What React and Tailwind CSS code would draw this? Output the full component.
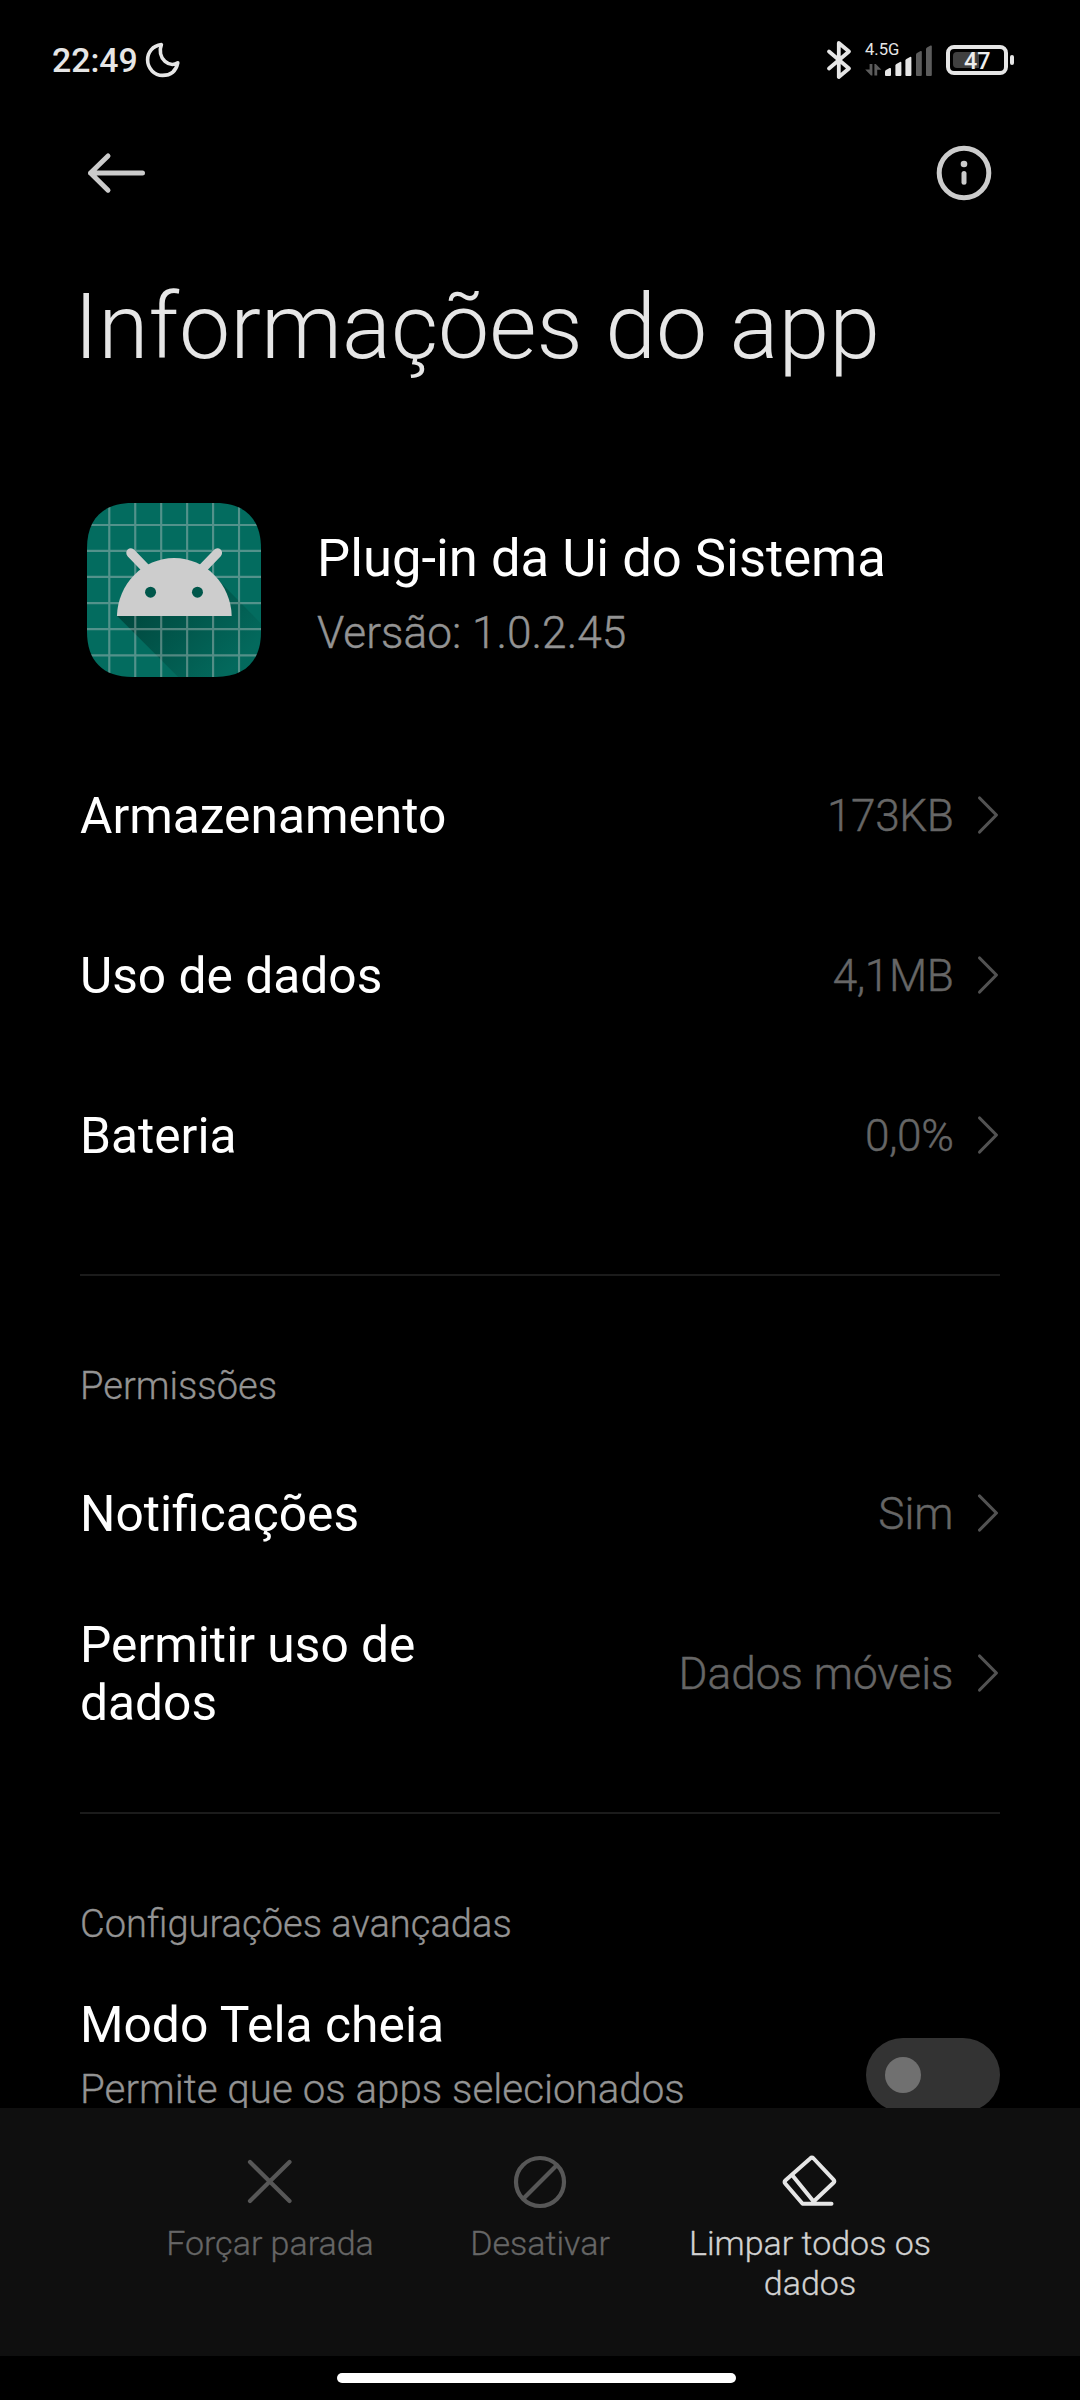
import React from "react";

function MoonIcon() {
  return (
    <svg className="h-[40px] w-[40px]" viewBox="0 0 40 40" fill="none" stroke="#e6e6e6" strokeWidth="3.6" strokeLinejoin="round">
      <path d="M18.4 4.6 C9.5 5.6 4.6 12.6 4.6 19.8 C4.6 28.6 11.5 35.4 19.6 35.4 C27.5 35.4 33 31 34.8 22.8 C31 25.2 26 24.8 22 21.4 C17.4 17.4 16 10.6 18.4 4.6 Z" />
    </svg>
  );
}

function BluetoothIcon() {
  return (
    <svg className="h-[40px] w-[26px]" viewBox="0 0 26 40" fill="none" stroke="#e6e6e6" strokeWidth="3.8" strokeLinejoin="round" strokeLinecap="round">
      <path d="M3 11.5 L23 28.5 L12.8 37 V3 L23 11.5 L3 28.5" />
    </svg>
  );
}

function SignalIcon() {
  return (
    <svg className="h-[32px] w-[68px]" viewBox="865 45 68 32">
      <g fill="#5c5c5c">
        <path d="M869.6 64 h2.8 v11.4 h-1.4 L865.2 69.6 h4.4z" />
        <path d="M874.4 75.4 v-11.4 h1.4 L881.4 69.8 h-4.2 v5.6z" />
        <path d="M916 54.5 q0 -1 1 -1.6 l3.6 -1.8 q1.2 -.5 1.2 .8 V75 q0 1 -1 1 h-3.8 q-1 0 -1 -1z" />
        <path d="M926 49 q0 -1 1 -1.6 l3.6 -1.8 q1.2 -.5 1.2 .8 V75 q0 1 -1 1 h-3.8 q-1 0 -1 -1z" />
      </g>
      <g fill="#e6e6e6">
        <path d="M885 71.6 q0 -1 1 -1.6 l3.6 -1.9 q1.4 -.5 1.4 .8 V75 q0 1 -1 1 h-4 q-1 0 -1 -1z" />
        <path d="M895.4 65.5 q0 -1 1 -1.6 l3.6 -1.9 q1.4 -.5 1.4 .8 V75 q0 1 -1 1 h-4 q-1 0 -1 -1z" />
        <path d="M905.4 60.5 q0 -1 1 -1.6 l3.6 -1.9 q1.4 -.5 1.4 .8 V75 q0 1 -1 1 h-4 q-1 0 -1 -1z" />
      </g>
    </svg>
  );
}

function Battery() {
  return (
    <div className="flex items-center gap-[2px]">
      <div className="relative h-[30px] w-[62px] rounded-[8px] border-4 border-[#e6e6e6]">
        <div className="absolute left-[3px] top-[3px] h-[16px] w-[26px] rounded-l-[4px] bg-[#404040]" />
        <div className="absolute left-[14px] top-0 text-[23.4px] font-medium leading-[24px] text-[#ededed]">47</div>
      </div>
      <div className="h-[10px] w-[4px] rounded-[2px] bg-[#e6e6e6]" />
    </div>
  );
}

function StatusBar() {
  return (
    <div className="flex h-[120px] items-center pl-[52px] pr-[66px]">
      <span className="pt-[2px] text-[33.8px] font-medium leading-[40px] text-[#e6e6e6]">22:49</span>
      <span className="ml-[5px]"><MoonIcon /></span>
      <div className="ml-auto flex items-center">
        <BluetoothIcon />
        <div className="relative ml-[13px] mt-[1px]">
          <SignalIcon />
          <span className="absolute left-0 top-[-5px] text-[16.6px] leading-[20px] text-[#e6e6e6]">4.5G</span>
        </div>
        <div className="ml-[13px]"><Battery /></div>
      </div>
    </div>
  );
}

function BackIcon() {
  return (
    <svg className="h-[42px] w-[60px]" viewBox="0 0 60 42" fill="none" stroke="#cccccc" strokeWidth="5" strokeLinecap="round" strokeLinejoin="round">
      <path d="M22 4 L4.5 21 L22 38.2 M4.5 21 H56.5" />
    </svg>
  );
}

function InfoIcon() {
  return (
    <svg className="h-[56px] w-[56px]" viewBox="0 0 56 56" fill="none" stroke="#cccccc" strokeWidth="5">
      <circle cx="28" cy="28" r="24.8" />
      <path d="M28 28.5 V37.2" strokeLinecap="round" />
      <circle cx="28" cy="19" r="3.3" fill="#cccccc" stroke="none" />
    </svg>
  );
}

function AppIcon() {
  return (
    <svg className="h-[174px] w-[174px]" viewBox="50 38 523 523">
      <defs>
        <clipPath id="tile">
          <path d="M186 38 H437 C525 38 573 86 573 174 V425 C573 513 525 561 437 561 H186 C98 561 50 513 50 425 V174 C50 86 98 38 186 38 Z" />
        </clipPath>
        <linearGradient id="shade" gradientUnits="userSpaceOnUse" x1="230" y1="300" x2="480" y2="540">
          <stop offset="0" stopColor="#00483e" />
          <stop offset="1" stopColor="#00483e" stopOpacity="0.08" />
        </linearGradient>
      </defs>
      <g clipPath="url(#tile)">
        <rect x="50" y="38" width="523" height="523" fill="#036c5f" />
        <path d="M140 377 L324 561 H573 V400 L440 265 Z" fill="url(#shade)" />
        <path d="M117 38 V561 M195 38 V561 M273 38 V561 M351 38 V561 M429 38 V561 M507 38 V561 M50 104 H573 M50 182 H573 M50 260 H573 M50 339 H573 M50 417 H573 M50 496 H573" stroke="#cccccc" strokeOpacity="0.4" strokeWidth="6.5" />
        <path d="M182 188 L232 240 M442 188 L392 240" stroke="#cdcdcd" strokeWidth="28" strokeLinecap="round" />
        <path d="M140 378 C142 282 218 203 312 203 C406 203 483 282 485 378 Z" fill="#cdcdcd" />
        <circle cx="241" cy="306" r="16.5" fill="#00574b" />
        <circle cx="382" cy="306" r="16.5" fill="#00574b" />
      </g>
    </svg>
  );
}

function Chevron() {
  return (
    <svg className="mb-[3px] ml-[21.5px] h-[40px] w-[25px] shrink-0" viewBox="0 0 25 40" fill="none" stroke="#525252" strokeWidth="3.2" strokeLinecap="round" strokeLinejoin="round">
      <path d="M4.6 3 L21.4 20 L4.6 37" />
    </svg>
  );
}

function Row({ label, value, numeric }) {
  return (
    <div className="flex h-[160px] items-center">
      <div className="w-[370px] text-[49.7px] leading-[58px] text-white">{label}</div>
      <div
        className={
          "ml-auto whitespace-nowrap text-[44.2px] font-light leading-[52px] text-[#666666] [-webkit-text-stroke:0.4px] " +
          (numeric ? "tracking-[-0.4px]" : "")
        }
      >
        {value}
      </div>
      <Chevron />
    </div>
  );
}

function Section({ title }) {
  return (
    <>
      <div className="mt-[58px] h-[2px] bg-[#1b1b1b]" />
      <div className="h-[158px] pt-[88px] text-[38.1px] font-light leading-[44px] text-[#939393] [-webkit-text-stroke:0.3px]">{title}</div>
    </>
  );
}

function Action({ icon, label, active }) {
  return (
    <div className={"flex w-[270px] flex-col items-center " + (active ? "text-[#d2d2d2]" : "text-[#666666]")}>
      {icon}
      <div className="mt-[13px] w-[250px] text-center text-[34px] font-light leading-[40px] [-webkit-text-stroke:0.3px]">{label}</div>
    </div>
  );
}

const iconClass = "h-[56px] w-[56px]";

export default function App() {
  return (
    <div className="flex h-[2400px] w-[1080px] flex-col overflow-hidden bg-black font-[Roboto,sans-serif]">
      <StatusBar />
      <header className="flex h-[106px] items-center justify-between pl-[86px] pr-[88px]">
        <BackIcon />
        <InfoIcon />
      </header>
      <h1 className="ml-[74px] mt-[46px] h-[110px] whitespace-nowrap text-[91.4px] font-light leading-[110px] text-[#e6e6e6]">
        Informações do app
      </h1>
      <section className="ml-[86.5px] mt-[121px] flex h-[174px]">
        <AppIcon />
        <div className="ml-[56.5px] pt-[24px]">
          <div className="text-[52.6px] leading-[62px] text-white">Plug-in da Ui do Sistema</div>
          <div className="mt-[18px] text-[44.2px] font-light leading-[52px] text-[#939393] [-webkit-text-stroke:0.4px]">Versão: 1.0.2.45</div>
        </div>
      </section>
      <main className="mt-[59px] min-h-0 flex-1 overflow-hidden px-[80px]">
        <Row label="Armazenamento" value="173KB" numeric />
        <Row label="Uso de dados" value="4,1MB" numeric />
        <Row label="Bateria" value="0,0%" numeric />
        <Section title="Permissões" />
        <Row label="Notificações" value="Sim" />
        <Row label="Permitir uso de dados" value="Dados móveis" />
        <Section title="Configurações avançadas" />
        <div className="flex justify-between">
          <div className="pt-[24px]">
            <div className="text-[49.8px] leading-[58px] text-white">Modo Tela cheia</div>
            <div className="mt-[12px] text-[40.3px] font-light leading-[48px] text-[#939393] [-webkit-text-stroke:0.3px]">Permite que os apps selecionados</div>
          </div>
          <div className="mt-[66px] flex h-[74px] w-[134px] items-center rounded-full bg-[#333333] pl-[19px]">
            <div className="h-[36px] w-[36px] rounded-full bg-[#707070]" />
          </div>
        </div>
      </main>
      <nav className="flex h-[248px] shrink-0 justify-center bg-[#0f0f0f] pt-[46px]">
        <Action
          label="Forçar parada"
          icon={
            <svg className={iconClass} viewBox="0 0 56 56" fill="none" stroke="#575757" strokeWidth="4.2" strokeLinecap="round">
              <path d="M8 8 L47.5 47 M47.5 8 L8 47" />
            </svg>
          }
        />
        <Action
          label="Desativar"
          icon={
            <svg className={iconClass} viewBox="0 0 56 56" fill="none" stroke="#575757" strokeWidth="4.2">
              <circle cx="28" cy="28" r="24" />
              <path d="M45 11 L11 45" />
            </svg>
          }
        />
        <Action
          active
          label="Limpar todos os dados"
          icon={
            <svg className={iconClass} viewBox="0 0 56 56" fill="none" stroke="#e6e6e6" strokeWidth="4" strokeLinecap="round" strokeLinejoin="round">
              <path d="M31.6 47.5 L51.5 28.8 Q53 27.2 51.5 25.6 L31.6 4.5 Q29.9 2.9 28.2 4.5 L3.6 26.2 Q1.8 27.9 3.4 29.8 L20.6 49.8 H49.5" />
              <path d="M10.5 21.6 L31.6 47.5" />
            </svg>
          }
        />
      </nav>
      <div className="h-[44px] shrink-0 pl-[337px] pt-[17px]">
        <div className="h-[10px] w-[399px] rounded-full bg-white" />
      </div>
    </div>
  );
}
